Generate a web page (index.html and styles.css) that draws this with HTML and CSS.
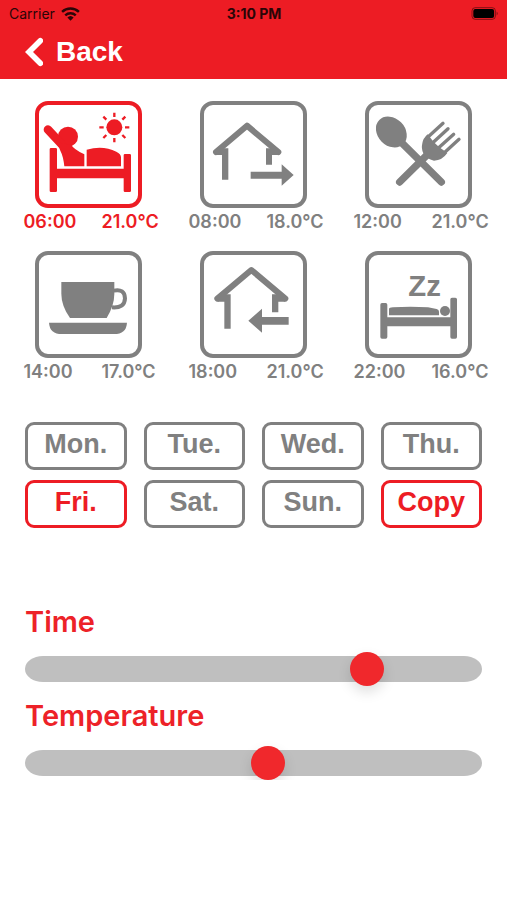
FILE: index.html
```html
<!DOCTYPE html>
<html lang="en">
<head>
    <meta charset="UTF-8">
    <meta name="viewport" content="width=device-width, initial-scale=1.0">
    <title>Schedule</title>
    <link rel="stylesheet" href="styles.css">
</head>
<body>
    <header>
        <div class="status-bar">
            <div class="carrier">
                <span>Carrier</span>
                <svg class="wifi" viewBox="0 0 54 40" aria-hidden="true">
                    <path d="M3 14a35 35 0 0 1 48 0" fill="none" stroke="currentColor" stroke-width="7"/>
                    <path d="M12 24a22 22 0 0 1 30 0" fill="none" stroke="currentColor" stroke-width="7"/>
                    <path d="M18 30a13 13 0 0 1 18 0l-9 9z" fill="currentColor"/>
                </svg>
            </div>
            <div class="clock">3:10 PM</div>
            <div class="battery">
                <svg viewBox="0 0 84 40" aria-hidden="true">
                    <rect x="2" y="2" width="72" height="36" rx="10" fill="none" stroke="currentColor" stroke-width="3" opacity="0.45"/>
                    <rect x="6" y="6" width="64" height="28" rx="6" fill="currentColor"/>
                    <path d="M78 14q6 6 0 12z" fill="currentColor" opacity="0.5"/>
                </svg>
            </div>
        </div>
        <nav>
            <a class="back" href="#">
                <svg viewBox="0 0 54 88" aria-hidden="true">
                    <path d="M46 10L12 44L46 78" fill="none" stroke="currentColor" stroke-width="17" stroke-linecap="round"/>
                </svg>
                <span>Back</span>
            </a>
        </nav>
    </header>

    <main>
        <section class="periods">
            <div class="period active">
                <button type="button" aria-label="Wake up">
                    <svg viewBox="58 30 297 297" aria-hidden="true">
                        <circle cx="284" cy="97" r="24"/>
                        <path d="M284 53v13M284 129v13M239 97h13M316 97h13M251 65l9 9M308 120l9 9M317 65l-9 9M260 120l-9 9" fill="none" stroke="currentColor" stroke-width="7"/>
                        <circle cx="145" cy="125" r="30"/>
                        <path d="M85 104l42 45" fill="none" stroke="currentColor" stroke-width="26" stroke-linecap="round"/>
                        <path d="M112 142L155 150Q162 163 194 178V214H134Q131 184 122 167Z"/>
                        <path d="M201 214V164Q250 150 290 170Q304 177 304 187V214Z"/>
                        <path d="M90 163q0-4 4-4h14q4 0 4 4v58h200v-40q0-4 4-4h14q4 0 4 4v106q0 4-4 4h-14q-4 0-4-4v-37H112v37q0 4-4 4H94q-4 0-4-4z"/>
                    </svg>
                </button>
                <div class="values"><span>06:00</span><span>21.0°C</span></div>
            </div>
            <div class="period">
                <button type="button" aria-label="Leave home">
                    <svg viewBox="58 30 297 297" aria-hidden="true">
                        <path d="M94 171L187 92L281 171" fill="none" stroke="currentColor" stroke-width="18" stroke-linecap="round" stroke-linejoin="round"/>
                        <path d="M94 180L112 160H131V254H112V180ZM281 180L262 160H244V209H262V180Z"/>
                        <path d="M198 230H291V208L327 240L291 272V251H198Z"/>
                    </svg>
                </button>
                <div class="values"><span>08:00</span><span>18.0°C</span></div>
            </div>
            <div class="period">
                <button type="button" aria-label="Lunch">
                    <svg viewBox="58 30 297 297" aria-hidden="true">
                        <ellipse cx="125" cy="111" rx="51" ry="41" transform="rotate(45 125 111)"/>
                        <path d="M158 145L275 261" fill="none" stroke="currentColor" stroke-width="22" stroke-linecap="round"/>
                        <path d="M150 261L240 172" fill="none" stroke="currentColor" stroke-width="22" stroke-linecap="round"/>
                        <path d="M218 145Q220 130 234 118L252 141L268 156L293 174Q278 196 253 197Q230 193 221 175Q214 161 218 145Z"/>
                        <path d="M235 126L280 85M251 142L295 101M267 158L312 118M283 174L328 133" fill="none" stroke="currentColor" stroke-width="10" stroke-linecap="round"/>
                    </svg>
                </button>
                <div class="values"><span>12:00</span><span>21.0°C</span></div>
            </div>
            <div class="period">
                <button type="button" aria-label="Afternoon">
                    <svg viewBox="58 30 297 297" aria-hidden="true">
                        <path d="M125 111H284V146Q284 180 261 219H151Q125 182 125 146Z"/>
                        <path d="M282 137Q315 130 316 160Q315 190 277 187" fill="none" stroke="currentColor" stroke-width="12"/>
                        <path d="M88 233H322Q320 267 283 267H127Q90 267 88 233Z"/>
                    </svg>
                </button>
                <div class="values"><span>14:00</span><span>17.0°C</span></div>
            </div>
            <div class="period">
                <button type="button" aria-label="Come home">
                    <svg viewBox="58 30 297 297" aria-hidden="true">
                        <path d="M98 161L200 75L302 161" fill="none" stroke="currentColor" stroke-width="18" stroke-linecap="round" stroke-linejoin="round"/>
                        <path d="M98 170L119 148H138V251H119V170ZM302 170L281 148H262V202H281V170Z"/>
                        <path d="M312 216H232V191L191 227L232 263V239H312Z"/>
                    </svg>
                </button>
                <div class="values"><span>18:00</span><span>21.0°C</span></div>
            </div>
            <div class="period">
                <button type="button" aria-label="Sleep">
                    <svg viewBox="58 30 297 297" aria-hidden="true">
                        <text class="zz" x="176" y="154">Zz</text>
                        <circle cx="286" cy="198" r="15"/>
                        <path d="M118 211V192Q118 188 130 187Q182 183 235 187L261 192Q268 194 268 200V211Z"/>
                        <path d="M92 179q0-5 5-5h11q5 0 5 5v38h189v-54q0-5 5-5h10q5 0 5 5v113q0 5-5 5h-10q-5 0-5-5v-32H113v32q0 5-5 5H97q-5 0-5-5z"/>
                    </svg>
                </button>
                <div class="values"><span>22:00</span><span>16.0°C</span></div>
            </div>
        </section>

        <section class="days">
            <button type="button">Mon.</button>
            <button type="button">Tue.</button>
            <button type="button">Wed.</button>
            <button type="button">Thu.</button>
            <button type="button" class="active">Fri.</button>
            <button type="button">Sat.</button>
            <button type="button">Sun.</button>
            <button type="button" class="active">Copy</button>
        </section>

        <section class="sliders">
            <label for="time">Time</label>
            <input type="range" id="time" min="0" max="1425" step="15" value="1095">
            <label for="temperature">Temperature</label>
            <input type="range" id="temperature" min="5" max="35" step="0.5" value="21">
        </section>
    </main>
</body>
</html>
```
FILE: styles.css
```css
* {
    box-sizing: border-box;
}
body {
    margin: 0;
    background-color: #fff;
    color: #808080;
    font-family: Inter, "Liberation Sans", sans-serif;
}
button {
    background-color: #fff;
    border: 4px solid #808080;
    color: #808080;
    padding: 0;
    cursor: pointer;
}
header {
    background-color: #ed1c24;
    padding-bottom: 3px;
}
.status-bar {
    display: grid;
    grid-template-columns: 1fr auto 1fr;
    align-items: center;
    height: 27px;
    padding: 0 8px 0 9px;
    color: #2b0507;
    font-size: 14px;
}
.carrier {
    display: flex;
    align-items: center;
    gap: 6px;
}
.wifi {
    width: 19px;
    height: 14px;
}
.clock {
    font-weight: 700;
}
.battery {
    display: flex;
    justify-content: flex-end;
    color: #000;
}
.battery svg {
    width: 28px;
    height: 13px;
}
nav {
    display: flex;
    align-items: center;
    height: 49px;
    padding: 0 25px;
}
.back {
    display: flex;
    align-items: center;
    gap: 13px;
    color: #fff;
    font-family: "Liberation Sans", Arial, sans-serif;
    font-size: 28px;
    font-weight: bold;
    text-decoration: none;
}
.back svg {
    width: 18px;
    height: 30px;
}
.periods {
    display: grid;
    grid-template-columns: repeat(3, 1fr);
    row-gap: 15px;
    padding: 22px 6px 0;
}
.period {
    display: flex;
    flex-direction: column;
    align-items: center;
}
.period button {
    width: 107px;
    height: 107px;
    border-radius: 13px;
}
.period svg {
    display: block;
    width: 100%;
    height: 100%;
    fill: currentColor;
}
.zz {
    font-family: "Liberation Sans", Arial, sans-serif;
    font-size: 88px;
    font-weight: bold;
}
.values {
    display: grid;
    grid-template-columns: 78px 52px;
    font-size: 18px;
    font-weight: 600;
    line-height: 28px;
    white-space: nowrap;
}
.days {
    display: grid;
    grid-template-columns: repeat(4, 1fr);
    gap: 10px 17px;
    padding: 36px 25px 0;
}
.days button {
    height: 48px;
    padding-bottom: 3px;
    border-width: 3px;
    border-radius: 9px;
    font-family: "Liberation Sans", Arial, sans-serif;
    font-size: 27px;
    font-weight: bold;
}
.active,
.active button {
    border-color: #ed1c24;
    color: #ed1c24;
}
.sliders {
    display: flex;
    flex-direction: column;
    gap: 13px;
    padding: 77px 25px 0;
}
.sliders label {
    color: #ed2228;
    font-size: 29px;
    font-weight: 600;
    line-height: 34px;
}
.sliders input {
    appearance: none;
    -webkit-appearance: none;
    width: 100%;
    height: 34px;
    margin: 0;
    background: none;
}
.sliders input::-webkit-slider-runnable-track {
    height: 26px;
    border-radius: 18px / 13px;
    background-color: #bfbfbf;
}
.sliders input::-webkit-slider-thumb {
    -webkit-appearance: none;
    width: 34px;
    height: 34px;
    margin-top: -4px;
    border-radius: 50%;
    background-color: #f0282c;
    box-shadow: 0 6px 13px rgba(0, 0, 0, 0.13);
}
```
